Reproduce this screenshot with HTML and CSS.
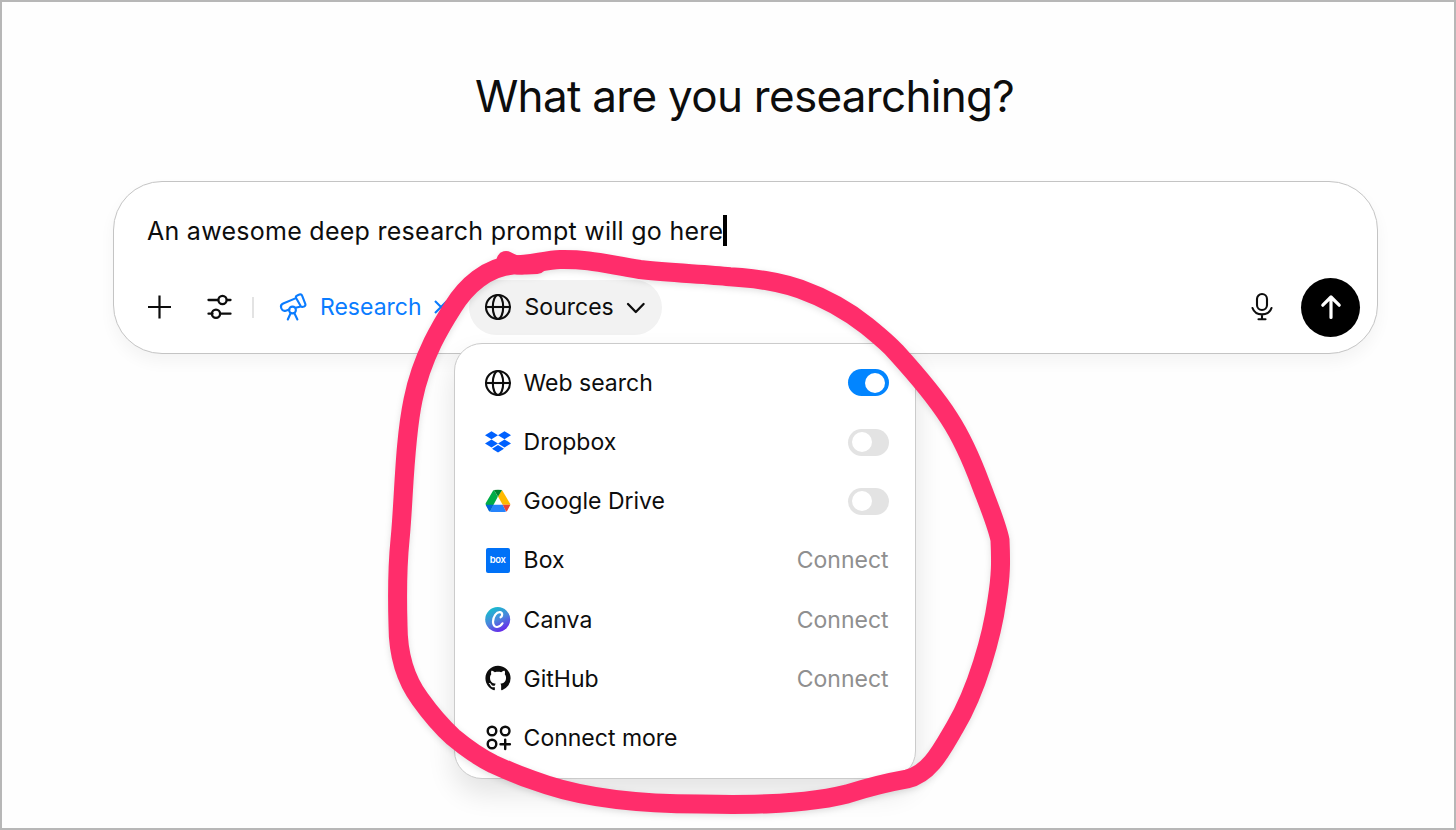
FILE: index.html
```html
<!DOCTYPE html>
<html lang="en">
<head>
    <meta charset="UTF-8">
    <meta name="viewport" content="width=device-width, initial-scale=1.0">
    <title>Research</title>
    <link rel="stylesheet" href="styles.css">
</head>
<body>
    <svg width="0" height="0" class="defs">
        <symbol id="globe" viewBox="0 0 28 28">
            <g fill="none" stroke="currentColor" stroke-width="2.1">
                <circle cx="14" cy="14" r="12"/>
                <ellipse cx="14" cy="14" rx="5.2" ry="12"/>
                <path d="M2 14h24"/>
            </g>
        </symbol>
    </svg>

    <main class="page">
        <h1 class="title">What are you researching?</h1>

        <div class="composer">
            <div class="prompt"><span>An awesome deep research prompt will go here</span><i class="caret"></i></div>

            <div class="toolbar">
                <button class="tool plus" aria-label="Add">
                    <svg width="26" height="26" viewBox="0 0 26 26" fill="none" stroke="currentColor" stroke-width="2.2"><path d="M13.500 1.500v23M2 13h23"/></svg>
                </button>
                <button class="tool sliders" aria-label="Tools">
                    <svg width="26" height="26" viewBox="0 0 26 26" fill="none" stroke="currentColor" stroke-width="2.3" stroke-linecap="round"><path d="M2.500 6H12M21 6h3.500M2.500 19.700h4M15 19.700h9.500"/><circle cx="16.500" cy="6" r="4.100"/><circle cx="10" cy="19.700" r="4.100"/></svg>
                </button>
                <span class="divider"></span>
                <button class="research">
                    <svg width="30" height="30" viewBox="0 0 30 30" fill="none" stroke="currentColor" stroke-width="2.1" stroke-linecap="round" stroke-linejoin="round">
                        <path d="M18 6.100 5.200 11.500a3.500 3.500 0 0 0-2 4.400l.3.800a3.500 3.500 0 0 0 4.300 2L11.300 17.500M17.500 15.800 21.900 14.700"/>
                        <path d="M19.200 3.500 21.500 2.500a2 2 0 0 1 2.600 1.200l3.200 8.200a2 2 0 0 1-1.200 2.500l-1.200.4a2 2 0 0 1-2.500-1.200L18.100 6.100a2 2 0 0 1 1.100-2.600z"/>
                        <circle cx="14.500" cy="18" r="3.400"/>
                        <path d="M12.600 21.300 9.800 27.500M16.400 21.300l3 6.200"/>
                    </svg>
                    <span>Research</span>
                    <svg class="close" width="14" height="14" viewBox="0 0 14 14" fill="none" stroke="currentColor" stroke-width="2.1"><path d="M1 1l12 12M13 1L1 13"/></svg>
                </button>

                <div class="sources">
                    <button class="sources-button">
                        <svg class="globe"><use href="#globe"/></svg>
                        <span>Sources</span>
                        <svg class="chevron" width="20" height="12" viewBox="0 0 20 12" fill="none" stroke="currentColor" stroke-width="2.300" stroke-linecap="round" stroke-linejoin="round"><path d="M2 2l7.800 8 7.800-8"/></svg>
                    </button>

                    <ul class="menu">
                        <li class="item">
                            <svg class="globe"><use href="#globe"/></svg>
                            <span class="name">Web search</span>
                            <span class="toggle on"></span>
                        </li>
                        <li class="item">
                            <svg class="icon" viewBox="0 0 28 28" fill="#0061fe"><path d="M7.500 3.200 14 7.200 7.500 11.200 1 7.200zM20.500 3.200 27 7.200 20.500 11.200 14 7.200zM7.500 11.400 14 15.400 7.500 19.400 1 15.400zM20.500 11.400 27 15.400 20.500 19.400 14 15.400zM14 17 20 20.700 14 24.500 8 20.700z"/></svg>
                            <span class="name">Dropbox</span>
                            <span class="toggle"></span>
                        </li>
                        <li class="item">
                            <svg class="icon" viewBox="0 0 28 28">
                                <path fill="#00ac47" d="M10 3 13.800 9.700 6 24.500 1.800 17.600Q1.400 16.800 1.800 16L9 3.800z"/>
                                <path fill="#ffba00" d="M18 3 26 16.500 26.300 17.700H18.700L14 9.500z"/>
                                <path fill="#00832d" d="M10 3Q14 2.300 18 3L14 9.700z"/>
                                <path fill="#2684fc" d="M5.800 24.600 9.300 17.700h9.400l3.400 6.900Q21.500 25 20.500 25H7.500Q6.500 25 5.800 24.600z"/>
                                <path fill="#0066da" d="M1.600 17.700H9.300L5.800 24.600Q5 24.200 4.600 23.400z"/>
                                <path fill="#ea4335" d="M18.700 17.700h7.700L23.400 23.400Q23 24.200 22.100 24.600z"/>
                            </svg>
                            <span class="name">Google Drive</span>
                            <span class="toggle"></span>
                        </li>
                        <li class="item">
                            <span class="icon"><span class="box-logo">box</span></span>
                            <span class="name">Box</span>
                            <span class="connect">Connect</span>
                        </li>
                        <li class="item">
                            <svg class="icon" viewBox="0 0 28 28">
                                <defs><linearGradient id="canva" x1=".25" y1="0" x2=".75" y2="1"><stop offset="0" stop-color="#12c0cd"/><stop offset=".5" stop-color="#4b86dc"/><stop offset="1" stop-color="#6a1cec"/></linearGradient></defs>
                                <circle cx="13.700" cy="13.500" r="12.500" fill="url(#canva)"/>
                                <path fill="none" stroke="#fff" stroke-width="2.200" stroke-linecap="round" d="M16.600 11.300c1.800-.8 2.500-4.600-.4-5.200-3.800-.5-7.100 4.500-7.200 9.600 0 3.200 1.600 5.500 4.100 5.300 2.500-.2 4.200-1.700 5.400-3.700"/>
                            </svg>
                            <span class="name">Canva</span>
                            <span class="connect">Connect</span>
                        </li>
                        <li class="item">
                            <svg class="icon" viewBox="-.9 -.4 17.800 17.800"><path fill="#0d0d0d" d="M8 0C3.580 0 0 3.580 0 8c0 3.540 2.290 6.530 5.470 7.590.4.070.55-.17.55-.38 0-.19-.01-.82-.01-1.490-2.010.37-2.530-.49-2.690-.94-.09-.23-.48-.94-.82-1.130-.28-.15-.68-.52-.01-.53.63-.01 1.080.58 1.230.82.72 1.210 1.870.87 2.330.66.07-.52.28-.87.51-1.070-1.780-.2-3.640-.89-3.640-3.950 0-.87.31-1.590.82-2.150-.08-.2-.36-1.020.08-2.120 0 0 .67-.21 2.200.82.64-.18 1.320-.27 2-.27s1.360.09 2 .27c1.530-1.040 2.200-.82 2.200-.82.44 1.100.16 1.920.08 2.120.51.56.82 1.270.82 2.150 0 3.070-1.870 3.750-3.650 3.950.29.25.54.73.54 1.480 0 1.070-.01 1.930-.01 2.200 0 .21.15.46.55.38A8.010 8.010 0 0 0 16 8c0-4.420-3.580-8-8-8z"/></svg>
                            <span class="name">GitHub</span>
                            <span class="connect">Connect</span>
                        </li>
                        <li class="item">
                            <svg class="icon" viewBox="0 0 28 28" fill="none" stroke="currentColor" stroke-width="2.400" stroke-linecap="round"><circle cx="8" cy="7" r="4.300"/><circle cx="21.200" cy="7" r="4.300"/><circle cx="8" cy="20" r="4.300"/><path d="M21.200 15.600v9.400M16.500 20.300h9.400"/></svg>
                            <span class="name">Connect more</span>
                        </li>
                    </ul>
                </div>

                <button class="tool mic" aria-label="Dictate">
                    <svg width="24" height="30" viewBox="0 0 24 30" fill="none" stroke="currentColor" stroke-width="2.100" stroke-linecap="round"><rect x="7" y="2" width="10" height="16" rx="5"/><path d="M2.500 16c1.500 4.300 5.300 6.400 9.500 6.400s8-2.100 9.500-6.400M12 22.500v4.500M8.500 27.300h7"/></svg>
                </button>
                <button class="send" aria-label="Send">
                    <svg width="24" height="28" viewBox="0 0 24 28" fill="none" stroke="#fff" stroke-width="3.200" stroke-linecap="round" stroke-linejoin="round"><path d="M12 24.500V4M3.800 12.200 12 4l8.200 8.200"/></svg>
                </button>
            </div>
        </div>
    </main>

    <!-- marker circle around the sources menu -->
    <svg class="marker" viewBox="0 0 1456 830">
        <path d="M506 260.500C512 264 520 266 526 265L537 264.500"/>
        <path d="M513 265C487 267 466 286 453 307C444 321 422 355 413 400C404 443 404 500 400 540C397 570 397 590 398 625C398 655 406 680 420 699C430 713 441 726 453 737C465 747 479 757 493 764C510 772 528 779 547 785C590 799 640 804 700 804C770 806 815 802 847 794C872 786 890 782 907 779C930 774 942 749 955 727C977 690 992 636 997 600C1001 575 1001 562 1000 540C997 525 989 506 981 485C974 466 964 441 949 418C935 396 916 374 896 352C888 343 878 335 867 326C847 310 825 298 800 289C778 281 752 278 730 276.700C705 274 670 273 640 269.500C605 264 590 259 560 259.500C545 260 530 265 513 265"/>
    </svg>
</body>
</html>
```
FILE: styles.css
```css
* {
    box-sizing: border-box;
    margin: 0;
    padding: 0;
}
body {
    position: relative;
    height: 830px;
    overflow: hidden;
    border: 2px solid #b7b7b7;
    background-color: #fefefe;
    color: #0d0d0d;
    font-family: Inter, "Liberation Sans", sans-serif;
    font-size: 23px;
}
button {
    display: flex;
    align-items: center;
    border: none;
    background: none;
    color: inherit;
    font: inherit;
    letter-spacing: inherit;
}
.defs {
    position: absolute;
}
.page {
    display: flex;
    flex-direction: column;
    padding: 64px 76px 0 111px;
}
.title {
    height: 60px;
    padding-right: 2px;
    font-size: 44px;
    font-weight: 400;
    letter-spacing: -0.7px;
    line-height: 60px;
    text-align: center;
    white-space: nowrap;
}
.composer {
    height: 173px;
    margin-top: 55px;
    padding: 31px 17px 0 32px;
    border: 1px solid #c4c4c4;
    border-radius: 49px;
    background-color: #fff;
    box-shadow: 0 8px 16px rgba(0, 0, 0, 0.045);
}
.prompt {
    display: flex;
    align-items: center;
    height: 36px;
    padding-left: 1px;
    font-size: 25px;
    letter-spacing: 0.27px;
    white-space: nowrap;
}
.caret {
    width: 4px;
    height: 31px;
    margin-top: -2px;
    background-color: #000;
}
.toolbar {
    display: flex;
    align-items: center;
    height: 60px;
    margin-top: 28px;
}
.sliders {
    margin-left: 34px;
}
.divider {
    width: 2px;
    height: 21px;
    margin-left: 20px;
    background-color: #e3e3e3;
}
.research {
    margin-left: 24px;
    color: #0a7cff;
}
.research span {
    margin-left: 12px;
}
.close {
    margin-left: 12px;
}
.sources {
    position: relative;
    margin-left: 21px;
}
.sources-button {
    width: 193px;
    height: 55px;
    padding-left: 15px;
    border-radius: 28px;
    background-color: #f2f2f2;
}
.globe,
.icon {
    flex: none;
    width: 28px;
    height: 28px;
}
.sources-button span {
    margin-left: 13px;
}
.chevron {
    margin: 2px 0 0 12px;
}
.menu {
    position: absolute;
    top: 63px;
    left: -15px;
    width: 462px;
    height: 436px;
    padding: 9.8px 26px 0 29px;
    border: 1px solid #cbcbcb;
    border-radius: 28px;
    background-color: #fff;
    box-shadow: 0 14px 28px rgba(0, 0, 0, 0.11);
    list-style: none;
}
.item {
    display: flex;
    align-items: center;
    height: 59.2px;
    white-space: nowrap;
}
.name {
    flex: 1;
    margin-left: 12px;
}
.connect {
    color: #8f8f8f;
}
.toggle {
    width: 41px;
    height: 27px;
    padding: 3.5px 4px;
    border-radius: 14px;
    background-color: #e3e3e3;
}
.toggle::before {
    content: "";
    display: block;
    width: 20px;
    height: 20px;
    border-radius: 50%;
    background-color: #fff;
}
.toggle.on {
    background-color: #0285ff;
}
.toggle.on::before {
    margin-left: auto;
}
.box-logo {
    display: block;
    width: 24px;
    height: 25px;
    margin: 2px 0 0 2px;
    border-radius: 2px;
    background-color: #0071f7;
    color: #fff;
    font-size: 9.5px;
    font-weight: 600;
    letter-spacing: -0.4px;
    line-height: 23px;
    text-align: center;
}
.mic {
    margin-left: auto;
}
.send {
    justify-content: center;
    width: 59px;
    height: 59px;
    margin-left: 27px;
    border-radius: 50%;
    background-color: #000;
}
.marker {
    position: absolute;
    top: -2px;
    left: -2px;
    width: 1456px;
    height: 830px;
    fill: none;
    stroke: #ff2d6b;
    stroke-width: 19px;
    stroke-linecap: round;
    stroke-linejoin: round;
    filter: drop-shadow(0 2px 3px rgba(0, 0, 0, 0.12));
    pointer-events: none;
}
```
